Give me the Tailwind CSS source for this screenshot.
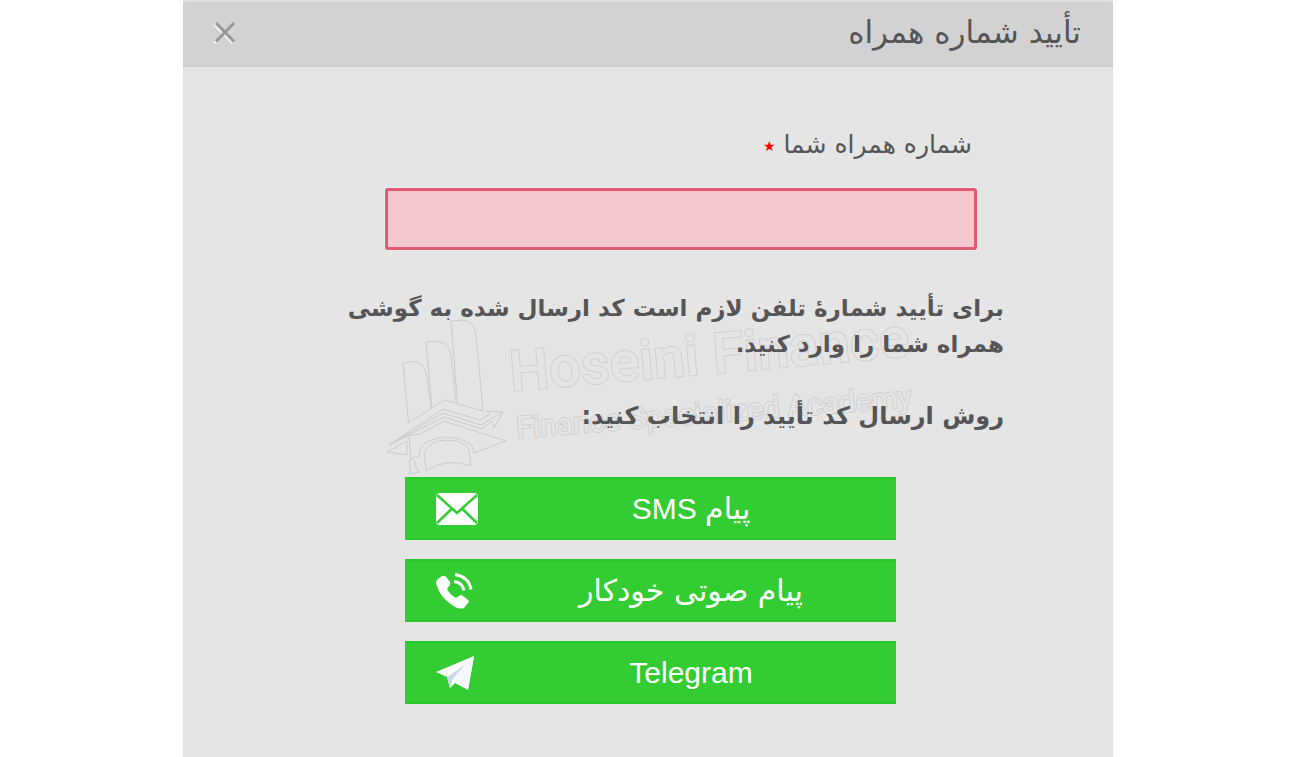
<!DOCTYPE html>
<html lang="fa" dir="rtl">
<head>
<meta charset="utf-8">
<meta name="viewport" content="width=device-width, initial-scale=1">
<title>تأیید شماره همراه</title>
<script src="https://cdn.jsdelivr.net/npm/@tailwindcss/browser@4"></script>
</head>
<body class="bg-white font-['DejaVu_Sans',sans-serif] text-[#555557]">
<main class="mx-auto flex min-h-screen w-full max-w-[930px] flex-col bg-[#e5e5e5]">
  <header class="flex h-[67px] items-center justify-between rounded-t-sm border-t-2 border-b-2 border-t-[#dfdfdf] border-b-[#cbcbcb] bg-[#d2d2d2] px-8 pb-1">
    <h1 class="text-[31px] leading-9">تأیید شماره همراه</h1>
    <button type="button" aria-label="بستن" class="-ml-1">
      <svg class="size-7" viewBox="0 0 28 28" fill="none"><path d="M3 6 21.500 25M6 23 3 25" stroke="#f0f0f0" stroke-width="3"/><path d="M5 5 23 23.500M23 5 5 23.500" stroke="#969696" stroke-width="3"/></svg>
    </button>
  </header>

  <form class="relative flex flex-col items-start pt-[60px] pr-[109px] pb-12 pl-8">
    <svg class="pointer-events-none absolute top-[233px] left-[192px] h-[190px] w-[560px]" viewBox="375 300 560 190" direction="ltr" fill="none" stroke="#cbcbcb" stroke-width="1" aria-hidden="true">
      <path d="M431 408 427 377Q425 361 411 361.500L403 363 408.500 423 444 400 483 411 476 335Q474 320 462 320L451 321 457.500 403M432 407 426 342 436 341Q450 342 451 356L456 402"/>
      <path d="M389 445 443 409 480 420 490 414 486 411 503 412 494 428 492 421 482 429 444 417ZM389 445 443 413 481 425 503 412"/>
      <path d="M389 445 407 436 420 434 444 421 506 441 474 453 472 446Q462 437 446 437 424 439 420 450L419 457 413 457M409 437 411 459M387 452 407 441 407 455ZM426 471 424 452Q431 440 447 440 464 440 469 450L471 466Q446 457 426 471ZM410 459H413Q416 462 415 465L419 472 410 474 410 465Q408 462 410 459Z"/>
      <g font-family="Roboto, sans-serif" fill="#e5e5e5" stroke="#d0d0d0" stroke-width="2" paint-order="stroke">
        <text x="511" y="391" font-size="56" font-weight="500" transform="rotate(-5 511 391)">Hoseini Finance</text>
        <text x="517" y="438" font-size="30" transform="rotate(-4.500 517 438)">Finance Specialized Academy</text>
      </g>
    </svg>

    <label for="phone" class="relative mr-8 text-[25px] leading-9">شماره همراه شما <span class="align-middle text-[14px] leading-none text-[#f00]">★</span></label>
    <input id="phone" type="tel" dir="ltr" required class="relative mt-[25px] mr-[27px] h-[62px] w-full max-w-[592px] rounded-xs border-3 border-[#e35b70] bg-[#f4c6ce] px-4 text-2xl outline-1 outline-[#e8f0f0]">

    <p class="relative mt-10 max-w-[662px] text-[23px] leading-9 font-bold">برای تأیید شمارهٔ تلفن لازم است کد ارسال شده به گوشی همراه شما را وارد کنید.</p>
    <p class="relative mt-9 text-[24px] leading-9 font-bold">روش ارسال کد تأیید را انتخاب کنید:</p>

    <div class="relative mt-[43px] mr-[108px] flex w-full max-w-[491px] flex-col gap-[19px] text-[30px] leading-9 text-white">
      <button type="button" dir="ltr" class="flex h-[63px] items-center gap-2 border-y-2 border-[#28c828] bg-[#33cd33] pl-[31px]">
        <svg class="h-8 w-[42px]" viewBox="0 0 42 32"><rect width="42" height="32" rx="4" fill="#fff"/><path d="M1 2 21 20 41 2M1 30 16 15.500M41 30 26 15.500" fill="none" stroke="#33cd33" stroke-width="2.500"/></svg>
        <span dir="rtl" class="flex-1 font-['Liberation_Sans','DejaVu_Sans',sans-serif]">پیام SMS</span>
      </button>
      <button type="button" dir="ltr" class="flex h-[63px] items-center gap-2 border-y-2 border-[#28c828] bg-[#33cd33] pl-[31px]">
        <svg class="h-9 w-[42px]" viewBox="0 0 42 36"><path d="M2 6 6 3Q9 2 11 5L14 9Q15 11 13 13L11 16Q14 22 20 25L23 23Q25 21 27 23L32 27Q34 29 31 31L28 35Q23 37 16 32 4 24 1 13 -1 8 2 6Z" fill="#fff"/><path d="M18 8.500Q26 9 28 17.500M19 1.500Q33 4 35 16.500" fill="none" stroke="#fff" stroke-width="3"/></svg>
        <span dir="rtl" class="flex-1">پیام صوتی خودکار</span>
      </button>
      <button type="button" dir="ltr" class="flex h-[63px] items-center gap-2 border-y-2 border-[#28c828] bg-[#33cd33] pl-[31px]">
        <svg class="h-[34px] w-[42px]" viewBox="0 0 42 34"><path d="M0 16 38 0 32 34 19 27 14 32 11 21Z" fill="#fff"/><path d="M11 21 30 8 17 23 14 32Z" fill="#c9d9ec"/><path d="M17 23 30 8 38 0 32 34Z" fill="#f5f9ff"/></svg>
        <span class="flex-1 font-['Liberation_Sans',sans-serif]">Telegram</span>
      </button>
    </div>
  </form>
</main>
</body>
</html>
